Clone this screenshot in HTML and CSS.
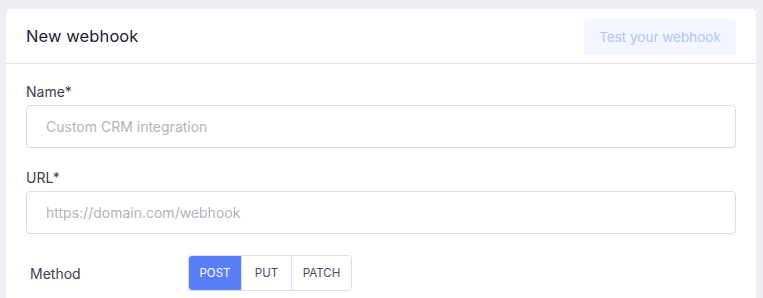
FILE: index.html
```html
<!DOCTYPE html>
<html>
<head>
<meta charset="utf-8">
<link rel="stylesheet" href="styles.css">
</head>
<body>
<div class="card">
  <div class="card-header">
    <h2 class="title">New webhook</h2>
    <button class="test-btn">Test your webhook</button>
  </div>
  <div class="card-body">
    <div class="field">
      <label class="label">Name*</label>
      <input class="input" type="text" placeholder="Custom CRM integration">
    </div>
    <div class="field">
      <label class="label">URL*</label>
      <input class="input" type="text" placeholder="https://domain.com/webhook">
    </div>
    <div class="method-row">
      <span class="method-label">Method</span>
      <div class="seg">
        <button class="seg-btn active">POST</button>
        <button class="seg-btn">PUT</button>
        <button class="seg-btn">PATCH</button>
      </div>
    </div>
  </div>
</div>
</body>
</html>
```
FILE: styles.css
```css
* { box-sizing: border-box; }
html, body { margin: 0; padding: 0; }
body {
  background: #eeeff5;
  font-family: "Inter", "Noto Sans", sans-serif;
  padding: 9px 7px 0 6px;
  height: 298px;
  overflow: hidden;
}
.card {
  background: #fff;
  border-radius: 5px 5px 0 0;
  height: 289px;
}
.card-header {
  display: flex;
  align-items: center;
  justify-content: space-between;
  height: 55px;
  padding: 0 20px;
  border-bottom: 1px solid #e2e3e8;
}
.title {
  margin: 0;
  font-size: 16.5px;
  font-weight: 400;
  color: #1e2238;
  letter-spacing: 0.1px;
}
.test-btn {
  width: 152px;
  height: 36px;
  border: none;
  border-radius: 4px;
  background: #f3f6fe;
  color: #b5c2f7;
  font-family: inherit;
  font-size: 13.5px;
  margin-top: 1px;
}
.card-body {
  padding: 18px 20px 0 20px;
}
.field {
  display: flex;
  flex-direction: column;
  margin-bottom: 20px;
}
.label {
  font-size: 14px;
  line-height: 20px;
  color: #3d404c;
  margin-bottom: 3px;
}
.input {
  height: 43px;
  border: 1px solid #dcdcdf;
  border-radius: 4px;
  padding: 0 19px;
  font-family: inherit;
  font-size: 14px;
  color: #333;
  outline: none;
}
.input::placeholder { color: #b3b3b8; }
.method-row {
  display: flex;
  align-items: center;
  margin-top: 21px;
  padding-left: 4px;
}
.method-label {
  width: 158px;
  font-size: 14px;
  color: #3d404c;
}
.seg {
  display: flex;
  height: 36px;
  border: 1px solid #dedee2;
  border-radius: 4px;
  overflow: hidden;
}
.seg-btn {
  border: none;
  border-left: 1px solid #dedee2;
  background: #fff;
  color: #4a4d58;
  font-family: inherit;
  font-size: 11.5px;
  padding: 0;
}
.seg-btn:nth-child(1) { width: 52px; border-left: none; }
.seg-btn:nth-child(2) { width: 50px; }
.seg-btn:nth-child(3) { width: 60px; }
.seg-btn.active {
  background: #5a7ef5;
  color: #fff;
}
```
